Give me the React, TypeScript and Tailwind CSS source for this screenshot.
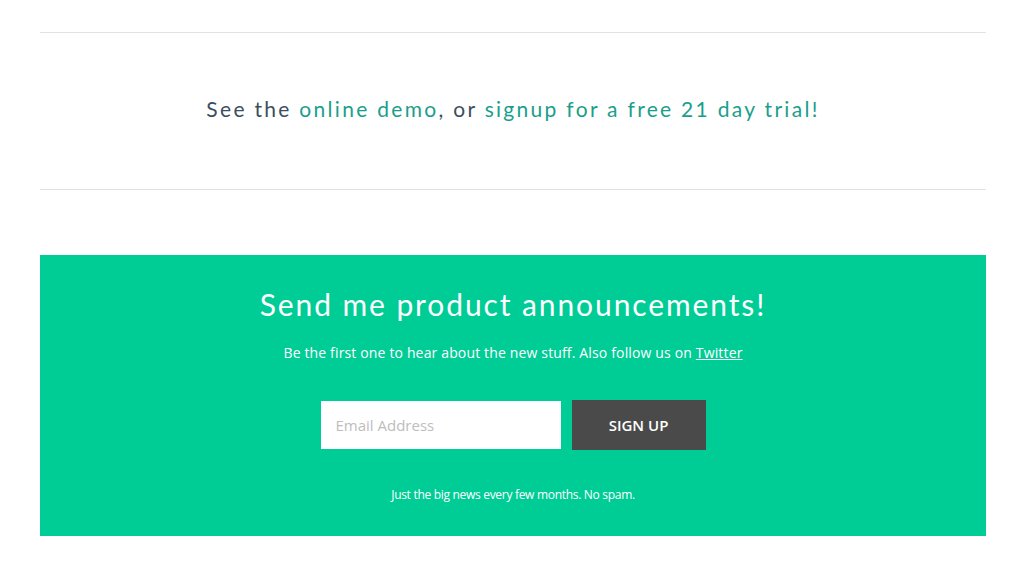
import React from "react";

export default function App() {
  return (
    <div className="w-[1024px] h-[571px] bg-white overflow-hidden" style={{ fontFamily: "Lato, 'Open Sans', sans-serif" }}>
      <div className="ml-[40px] w-[946px] pt-[32px]">
        <div className="border-t border-[#dfe3e6] border-b h-[158px] flex items-center justify-center">
          <p className="text-[21px] tracking-[2.3px] text-[#3c4e5e] font-['Lato'] mt-[-4px]">
            See the <a className="text-[#1a9e8c]">online demo</a>, or{" "}
            <a className="text-[#1a9e8c]">signup for a free 21 day trial!</a>
          </p>
        </div>
        <div className="mt-[65px] h-[281px] bg-[#00cc96] flex flex-col items-center">
          <h2 className="mt-[31px] text-[30px] leading-[36px] tracking-[1.9px] text-white font-['Lato']">
            Send me product announcements!
          </h2>
          <p className="mt-[21px] text-[14px] leading-[20px] text-white font-['Open_Sans'] tracking-[0.15px]">
            Be the first one to hear about the new stuff. Also follow us on <a className="underline">Twitter</a>
          </p>
          <div className="mt-[37px] flex items-center gap-[11px]">
            <div className="w-[240px] h-[48px] bg-white flex items-center px-[15px]">
              <span className="text-[15px] text-[#bdbdbd] font-['Open_Sans']">Email Address</span>
            </div>
            <button className="w-[134px] h-[50px] bg-[#4a4a4a] text-white text-[15px] font-semibold font-['Open_Sans']">
              SIGN UP
            </button>
          </div>
          <p className="mt-[37px] text-[12px] leading-[16px] text-white font-['Open_Sans'] tracking-[-0.3px]">
            Just the big news every few months. No spam.
          </p>
        </div>
      </div>
    </div>
  );
}
